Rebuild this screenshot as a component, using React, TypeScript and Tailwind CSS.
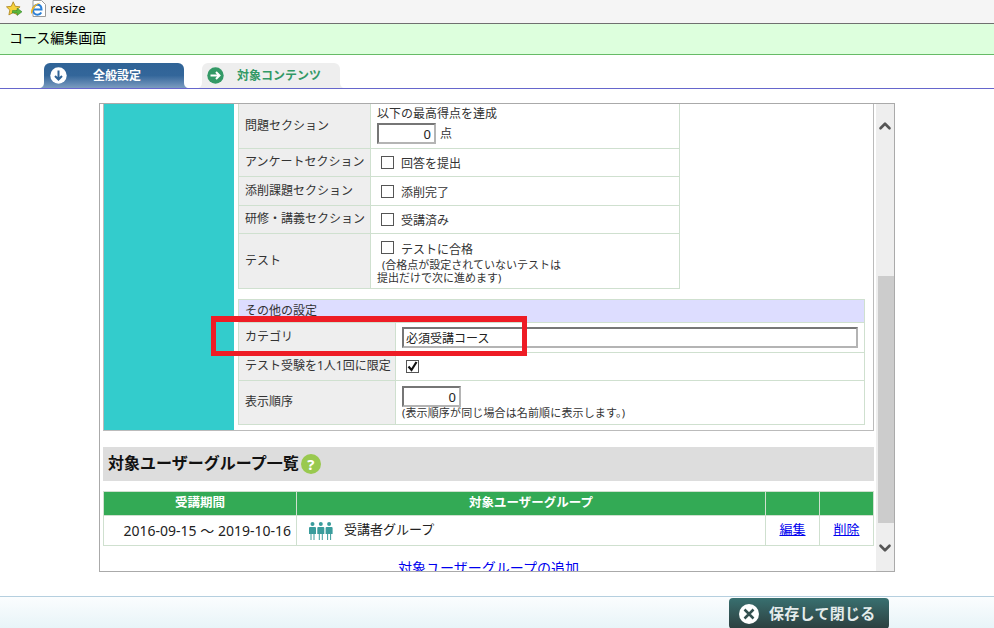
import { ChevronDown, ChevronUp } from "lucide-react";

function StarIcon() {
  return (
    <svg width="18" height="16" viewBox="0 0 22 20" className="mb-[5px]">
      <path d="M10 1l2.6 5.6 6 .7-4.4 4.1 1.2 6-5.4-3-5.4 3 1.2-6L1.600 7.300l6-.7z" fill="#f6d23c" stroke="#a8801c" strokeWidth="1" />
      <path d="M9 12h6V9l6 4.500-6 4.500v-3H9z" fill="#5cb83c" stroke="#2f7f2a" strokeWidth="0.700" />
    </svg>
  );
}

function IeIcon() {
  return (
    <svg width="16" height="17" viewBox="0 0 16 17" className="mb-[7px]">
      <path d="M3 .5h8.500l4 4v12H3z" fill="#fff" stroke="#9a9a9a" />
      <path d="M3.500 9.500h8c0-3-1.700-4.800-4-4.800-2.600 0-4.500 2.200-4.500 5s1.900 5 4.500 5c1.800 0 3-.8 3.800-2.200" fill="none" stroke="#2b7fd6" strokeWidth="2" />
      <path d="M1 13C.5 8 5 3 11 2.500 7 4 3 8 2 14z" fill="#f0b428" />
    </svg>
  );
}

function PeopleIcon() {
  const figure = "M3.500 0a2 2 0 1 1 0 4 2 2 0 0 1 0-4zM1 5h5a1 1 0 0 1 1 1v6H5.500v6h-1v-6h-2v6h-1v-6H0V6a1 1 0 0 1 1-1z";
  return (
    <svg width="24" height="18" viewBox="0 0 24 18" fill="#3a9c9c">
      <path d={figure} />
      <path d={figure} transform="translate(8.300 0)" />
      <path d={figure} transform="translate(16.600 0)" />
    </svg>
  );
}

function Flare({ side, color }: { side: "left" | "right"; color: string }) {
  return (
    <svg
      width="5"
      height="6"
      viewBox="0 0 5 6"
      className={side === "left" ? "absolute bottom-0 -left-[5px]" : "absolute bottom-0 -right-[5px]"}
    >
      <path d={side === "left" ? "M5 0v6H0c3 0 5-2 5-6z" : "M0 0v6h5C2 6 0 4 0 0z"} fill={color} />
    </svg>
  );
}

function CheckBox({ checked }: { checked?: boolean }) {
  return (
    <span className="relative block w-[13px] h-[13px] border border-[#555] bg-white shrink-0">
      {checked && (
        <svg width="13" height="13" viewBox="0 0 13 13" className="absolute -top-px -left-px">
          <path d="M2.500 6.500l3 3.500 5-8" fill="none" stroke="#111" strokeWidth="2.200" />
        </svg>
      )}
    </span>
  );
}

function TextBox({ value, className }: { value: string; className: string }) {
  return (
    <input
      readOnly
      value={value}
      className={`h-[21px] border-2 border-t-[#767676] border-l-[#767676] border-r-[#b4b4b4] border-b-[#b4b4b4] bg-white text-[#222] outline-none ${className}`}
    />
  );
}

function Row({ label, height, labelWidth, children }: { label: string; height: string; labelWidth: string; children: React.ReactNode }) {
  return (
    <div className={`flex border-b border-[#cfe0cf] ${height}`}>
      <div className={`flex items-center pl-[6px] pb-[1px] bg-[#eeeeee] border-r border-[#cfe0cf] shrink-0 ${labelWidth}`}>{label}</div>
      <div className="flex-1 min-w-0">{children}</div>
    </div>
  );
}

function CheckCell({ text }: { text: string }) {
  return (
    <div className="flex items-center h-full pl-[10px] gap-[7px]">
      <CheckBox />
      <span className="pt-[3px]">{text}</span>
    </div>
  );
}

export default function App() {
  return (
    <div className="h-screen overflow-hidden bg-white text-[12px] text-[#333] font-['Noto_Sans','Noto_Sans_CJK_JP',sans-serif]">
      <div className="flex items-center h-[24px] pl-[5px] gap-[7px] bg-[#f5f5f5] border-b border-[#707070] text-[13px] text-black">
        <StarIcon />
        <IeIcon />
        <span className="leading-[14px] mb-[8px] ml-[-3px]">resize</span>
      </div>

      <div className="flex items-center h-[31px] pl-[9px] pb-[4px] bg-[#ddffdd] border-b border-[#66bb66] text-[14px] text-black">
        コース編集画面
      </div>

      <div className="flex items-end h-[34px] pl-[44px] gap-[18px] border-b border-[#6666cc]">
        <div className="relative flex items-center w-[140px] h-[25px] pl-[6px] rounded-t-[6px] bg-gradient-to-b from-[#2f6396] via-[#33669a] to-[#7b9cc0] text-white font-bold">
          <Flare side="left" color="#7b9cc0" />
          <Flare side="right" color="#7b9cc0" />
          <svg width="17" height="17" viewBox="0 0 17 17">
            <circle cx="8.500" cy="8.500" r="8.200" fill="#fff" />
            <path d="M8.500 3.500v9M5 9l3.500 3.500L12 9" fill="none" stroke="#2f6396" strokeWidth="2" />
          </svg>
          <span className="ml-[26px]">全般設定</span>
        </div>
        <div className="relative flex items-center w-[138px] h-[25px] pl-[5px] rounded-t-[6px] bg-[#eeeeee] text-[#339966] font-bold">
          <Flare side="left" color="#eeeeee" />
          <Flare side="right" color="#eeeeee" />
          <svg width="17" height="17" viewBox="0 0 17 17">
            <circle cx="8.500" cy="8.500" r="8.200" fill="#339966" />
            <path d="M3.500 8.500h9M9 5l3.500 3.500L9 12" fill="none" stroke="#fff" strokeWidth="2" />
          </svg>
          <span className="ml-[13px]">対象コンテンツ</span>
        </div>
      </div>

      <div className="relative flex w-[796px] h-[469px] mt-[14px] ml-[99px] border border-[#aaaaaa] overflow-hidden">
        <div className="w-[774px] pl-[3px] overflow-hidden">
          <div className="flex w-[771px] h-[327px] border-x border-b border-[#bbbbbb]">
            <div className="w-[130px] bg-[#33cccc]" />
            <div className="flex-1 pl-[4px]">
              <div className="w-[442px] border-x border-[#cfe0cf]">
                <Row label="問題セクション" height="h-[45px]" labelWidth="w-[132px]">
                  <div className="pl-[6px] pt-[2px]">
                    <div className="leading-[16px]">以下の最高得点を達成</div>
                    <div className="flex items-center gap-[4px] mt-[1px]">
                      <TextBox value="0" className="w-[59px] text-right text-[13px] pr-[3px]" />
                      <span>点</span>
                    </div>
                  </div>
                </Row>
                <Row label="アンケートセクション" height="h-[28px]" labelWidth="w-[132px]">
                  <CheckCell text="回答を提出" />
                </Row>
                <Row label="添削課題セクション" height="h-[29px]" labelWidth="w-[132px]">
                  <CheckCell text="添削完了" />
                </Row>
                <Row label="研修・講義セクション" height="h-[28px]" labelWidth="w-[132px]">
                  <CheckCell text="受講済み" />
                </Row>
                <Row label="テスト" height="h-[55px]" labelWidth="w-[132px]">
                  <div className="pl-[6px] pt-[7px]">
                    <div className="flex items-start gap-[7px] pl-[4px] h-[17px]">
                      <CheckBox />
                      <span className="leading-[16px] mt-[1px]">テストに合格</span>
                    </div>
                    <div className="text-[11px] leading-[13px]">
                      <div className="pl-[5px]">(合格点が設定されていないテストは</div>
                      <div>提出だけで次に進めます)</div>
                    </div>
                  </div>
                </Row>
              </div>

              <div className="w-[627px] mt-[10px] border border-[#cfe0cf]">
                <div className="flex items-center h-[23px] pl-[6px] bg-[#ddddff] border-b border-[#cfe0cf]">その他の設定</div>
                <Row label="カテゴリ" height="h-[30px]" labelWidth="w-[157px]">
                  <div className="pl-[6px] pt-[4px]">
                    <TextBox value="必須受講コース" className="w-[456px] pl-[2px] text-[12px]" />
                  </div>
                </Row>
                <Row label="テスト受験を1人1回に限定" height="h-[28px]" labelWidth="w-[157px]">
                  <div className="flex items-center h-full pl-[10px]">
                    <CheckBox checked />
                  </div>
                </Row>
                <div className="flex h-[43px]">
                  <div className="flex items-center w-[157px] pl-[6px] pb-[1px] bg-[#eeeeee] border-r border-[#cfe0cf] shrink-0">表示順序</div>
                  <div className="pl-[6px] pt-[5px]">
                    <TextBox value="0" className="block w-[59px] text-right text-[13px] pr-[3px]" />
                    <div className="text-[11px] leading-[13px] mt-[-1px] tracking-[0.14px]">(表示順序が同じ場合は名前順に表示します。)</div>
                  </div>
                </div>
              </div>
            </div>
          </div>

          <div className="flex items-center w-[771px] h-[34px] mt-[16px] pl-[5px] bg-[#dddddd] text-[16px] font-bold text-[#111]">
            <span className="pb-[3px]">対象ユーザーグループ一覧</span>
            <span className="flex items-center justify-center w-[20px] h-[20px] ml-[2px] rounded-full bg-[#99c94f] text-white text-[15px] font-bold">?</span>
          </div>

          <table className="w-[771px] mt-[10px] table-fixed border-collapse text-[13px]">
            <colgroup>
              <col className="w-[193px]" />
              <col />
              <col className="w-[54px]" />
              <col className="w-[54px]" />
            </colgroup>
            <thead>
              <tr className="h-[24px] bg-[#33aa55] text-white text-[12.5px]">
                <th className="border border-[#cfe0cf] font-bold">受講期間</th>
                <th className="border border-[#cfe0cf] font-bold">対象ユーザーグループ</th>
                <th className="border border-[#cfe0cf]" />
                <th className="border border-[#cfe0cf]" />
              </tr>
            </thead>
            <tbody>
              <tr className="h-[30px] text-[#222]">
                <td className="border border-[#cfe0cf] pr-[5px] text-right text-[14px]">2016-09-15 ～ 2019-10-16</td>
                <td className="border border-[#cfe0cf] pl-[12px]">
                  <div className="flex items-center gap-[11px]">
                    <PeopleIcon />
                    <span className="pb-[1px]">受講者グループ</span>
                  </div>
                </td>
                <td className="border border-[#cfe0cf] text-center pb-[1px]">
                  <a href="#" className="text-[#0000ee] underline">編集</a>
                </td>
                <td className="border border-[#cfe0cf] text-center pb-[1px]">
                  <a href="#" className="text-[#0000ee] underline">削除</a>
                </td>
              </tr>
            </tbody>
          </table>

          <div className="mt-[11px] text-center text-[14px]">
            <a href="#" className="text-[#0000ee] underline">対象ユーザーグループの追加</a>
          </div>
        </div>

        <div className="w-[20px] pl-[2px] shrink-0">
          <div className="h-full bg-[#eeeeee]">
            <div className="flex justify-center h-[172px] pt-[13px]">
              <ChevronUp size={18} strokeWidth={3.500} className="text-[#555]" />
            </div>
            <div className="h-[247px] ml-[2px] bg-[#cccccc]" />
            <div className="flex justify-center pt-[16px]">
              <ChevronDown size={18} strokeWidth={3.500} className="text-[#555]" />
            </div>
          </div>
        </div>

        <div className="absolute left-[111px] top-[212px] w-[316px] h-[40px] border-[5px] border-t-[6px] border-[#ee1c25]" />
      </div>

      <div className="flex justify-end h-[32px] mt-[24px] pt-[1px] pr-[105px] border-t border-[#b5cfdf] bg-gradient-to-b from-[#fbfdfe] to-[#e8f4f8]">
        <div className="flex items-center w-[160px] h-[31px] pl-[9px] rounded-[4px] bg-gradient-to-b from-[#387070] to-[#2c3f3f] text-[15px] font-bold text-[#e4ecec]">
          <svg width="22" height="22" viewBox="0 0 22 22">
            <circle cx="11" cy="11" r="10" fill="#fff" />
            <path d="M6.500 6.500l9 9M15.500 6.500l-9 9" stroke="#33504f" strokeWidth="2.500" />
          </svg>
          <span className="ml-[9px] tracking-[0.300px]">保存して閉じる</span>
        </div>
      </div>
    </div>
  );
}
